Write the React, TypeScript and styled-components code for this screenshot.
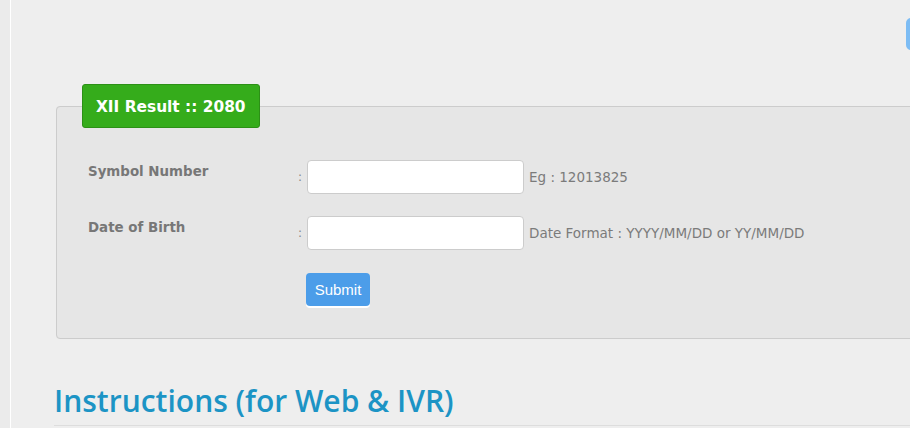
import styled, { createGlobalStyle } from "styled-components";

const GlobalStyle = createGlobalStyle`
  html, body {
    margin: 0;
    padding: 0;
    background: #ebebeb;
    overflow: hidden;
  }
`;

const Page = styled.div`
  margin-left: 10px;
  border-left: 1px solid #ffffff;
  background: #eeeeee;
  min-height: 428px;
  padding-left: 43px;
  width: 1000px;
`;

const Inner = styled.div`
  width: 922px;
`;

const TopBar = styled.div`
  padding-top: 18px;
  display: flex;
  justify-content: flex-end;
`;

const TopButton = styled.button`
  width: 70px;
  height: 32px;
  border: none;
  border-radius: 5px;
  background: #7cbcf4;
`;

const Fieldset = styled.fieldset`
  margin: 34px 2px 0;
  padding: 32px 25px 32px;
  border: 1px solid #cccccc;
  border-radius: 4px;
  background: #e6e6e6;
`;

const Legend = styled.legend`
  box-sizing: border-box;
  height: 44px;
  padding: 2px 13px 0;
  background: #35ac1b;
  border: 1px solid #2c9016;
  border-radius: 3px;
  color: #ffffff;
  font-family: "DejaVu Sans", Verdana, sans-serif;
  font-weight: bold;
  font-size: 15.4px;
  line-height: 40px;
`;

const Row = styled.div<{ $gap?: number }>`
  display: flex;
  align-items: flex-start;
  height: 33px;
  margin-bottom: ${(p) => p.$gap ?? 23}px;
`;

const Label = styled.div`
  width: 210px;
  padding: 2px 0 0 6px;
  font-family: "DejaVu Sans", Tahoma, sans-serif;
  font-weight: bold;
  font-size: 13.4px;
  line-height: 20px;
  color: #777777;
`;

const Colon = styled.span`
  width: 9px;
  padding-top: 1px;
  font-family: "DejaVu Sans", Tahoma, sans-serif;
  font-size: 12px;
  line-height: 33px;
  color: #888888;
`;

const Input = styled.input`
  box-sizing: border-box;
  width: 217px;
  height: 34px;
  margin: 0;
  border: 1px solid #cccccc;
  border-radius: 4px;
  background: #ffffff;
`;

const Hint = styled.span`
  margin-left: 5px;
  font-family: "DejaVu Sans", Tahoma, sans-serif;
  font-size: 13.5px;
  line-height: 34px;
  color: #7b7b7b;
`;

const SubmitButton = styled.button`
  margin-left: 224px;
  width: 64px;
  height: 33px;
  border: none;
  border-radius: 4px;
  background: #4c9de9;
  color: #ffffff;
  font-family: "Liberation Sans", Arial, sans-serif;
  font-size: 15px;
  box-shadow: 0 2px 0 #ffffff;
  padding: 0;
`;

const Heading = styled.h2`
  margin: 44px 0 0;
  padding-bottom: 6px;
  border-bottom: 1px solid #dddddd;
  font-family: "Open Sans", sans-serif;
  font-weight: 600;
  font-size: 30px;
  line-height: 36px;
  color: #1c94c5;
`;

export default function App() {
  return (
    <>
      <GlobalStyle />
      <Page>
        <Inner>
          <TopBar>
            <TopButton />
          </TopBar>
          <Fieldset>
            <Legend>XII Result :: 2080</Legend>
            <Row>
              <Label>Symbol Number</Label>
              <Colon>:</Colon>
              <Input type="text" />
              <Hint>Eg : 12013825</Hint>
            </Row>
            <Row $gap={24}>
              <Label>Date of Birth</Label>
              <Colon>:</Colon>
              <Input type="text" />
              <Hint>Date Format : YYYY/MM/DD or YY/MM/DD</Hint>
            </Row>
            <SubmitButton>Submit</SubmitButton>
          </Fieldset>
          <Heading>Instructions (for Web &amp; IVR)</Heading>
        </Inner>
      </Page>
    </>
  );
}
